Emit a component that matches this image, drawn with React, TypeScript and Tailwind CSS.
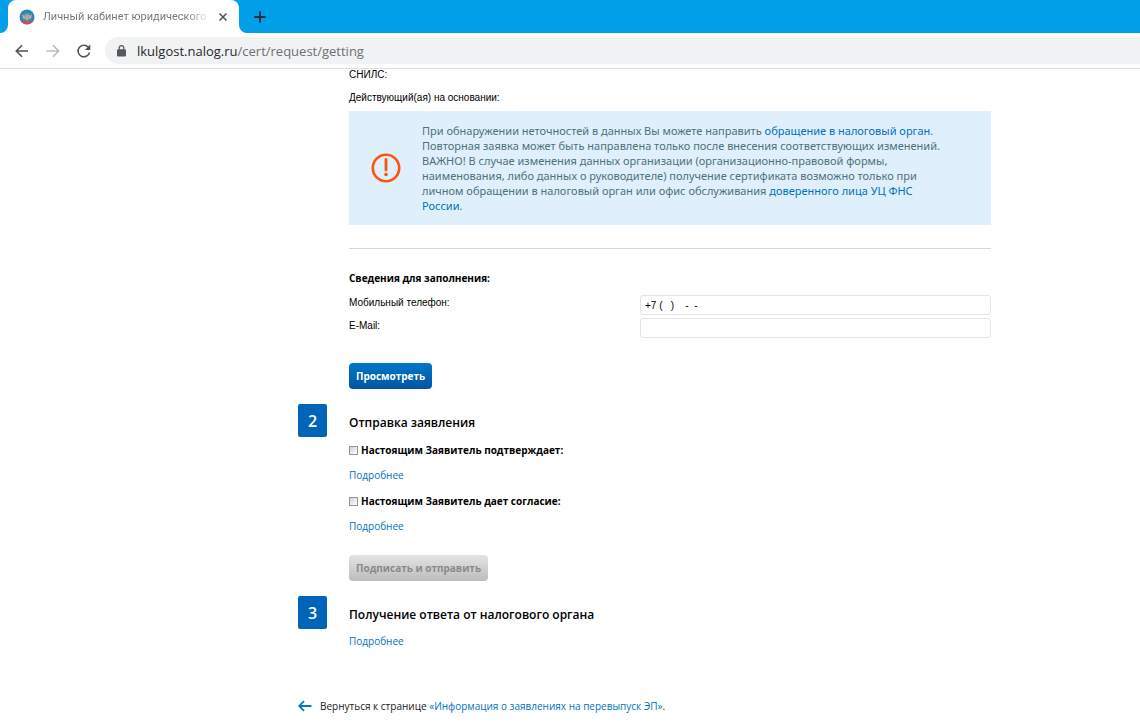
import { useState } from "react";
import type { ReactNode } from "react";

const link = "text-[#0072bc] hover:underline";

function TabStrip() {
  return (
    <div className="flex h-[33px]">
      <div className="w-2 shrink-0 rounded-br-lg bg-[#009fe8]" />
      <div className="shrink-0 bg-[#009fe8]">
        <div className="flex h-full w-[231px] items-center rounded-t-lg bg-white pl-[11px] pr-2">
          <svg className="size-4 shrink-0" viewBox="0 0 16 16" aria-hidden="true">
            <circle cx="8" cy="8" r="7.5" fill="#2a88b5" />
            <path d="M1 10.5A7.5 7.5 0 0 0 15 10.5Q8 15 1 10.5Z" fill="#d9485a" />
            <path
              d="M3 5l2.5 1.2L6.4 4l1.6 1 1.6-1 .9 2.2L13 5l-.7 5-2.4.4L8 12.4l-1.900-2L3.700 10z"
              fill="#8e9fa6"
            />
            <path d="M6.500 6.200h3v3L8 10.700 6.500 9.200z" fill="#b9a79b" />
            <path d="M4 6.500l1.500 2.500M12 6.500l-1.500 2.500" stroke="#c7d8de" strokeWidth=".7" />
          </svg>
          <span className="ml-2 flex-1 whitespace-nowrap bg-linear-to-r from-[#707478] from-85% to-white bg-clip-text font-[Roboto,'Open_Sans',sans-serif] text-[11px] leading-4 text-transparent">
            Личный кабинет юридического
          </span>
          <button type="button" aria-label="Закрыть вкладку" className="ml-1 flex size-4 shrink-0 items-center justify-center">
            <svg className="size-2" viewBox="0 0 8 8" aria-hidden="true">
              <path d="M.5.5l7 7M7.500.5l-7 7" stroke="#4c5054" strokeWidth="1.500" />
            </svg>
          </button>
        </div>
      </div>
      <div className="flex flex-1 items-center rounded-bl-lg bg-[#009fe8] pl-[13px]">
        <button type="button" aria-label="Новая вкладка" className="flex size-4 items-center justify-center">
          <svg className="size-3" viewBox="0 0 12 12" aria-hidden="true">
            <path d="M6 .3v11.400M.3 6h11.400" stroke="#25303a" strokeWidth="2" />
          </svg>
        </button>
      </div>
    </div>
  );
}

function AddressBar() {
  return (
    <div className="flex h-9 items-center border-b border-[#dcdee0] pl-3">
      <button type="button" aria-label="Назад" className="flex size-5 items-center justify-center">
        <svg className="size-4" viewBox="0 0 16 16" fill="none" stroke="#505458" strokeWidth="1.600" aria-hidden="true">
          <path d="M14 8H2.500M8 2.300L2.300 8 8 13.700" />
        </svg>
      </button>
      <button type="button" aria-label="Вперёд" className="ml-[11px] flex size-5 items-center justify-center">
        <svg className="size-4" viewBox="0 0 16 16" fill="none" stroke="#b9bcbf" strokeWidth="1.600" aria-hidden="true">
          <path d="M1.500 8H13M8 2.300L13.700 8 8 13.700" />
        </svg>
      </button>
      <button type="button" aria-label="Обновить" className="ml-[11px] flex size-5 items-center justify-center">
        <svg className="size-4" viewBox="0 0 16 16" aria-hidden="true">
          <path d="M13.500 9.500A5.800 5.800 0 1 1 12.200 4.100L13.300 5.300" fill="none" stroke="#505458" strokeWidth="1.500" />
          <path d="M14.300 1.500v5.500H8.800z" fill="#505458" />
        </svg>
      </button>
      <div className="ml-[11px] flex h-[27px] flex-1 items-center rounded-l-full bg-[#f0f2f3] pl-3">
        <svg className="h-3 w-[9px] shrink-0" viewBox="0 0 9 12" aria-hidden="true">
          <path d="M2.200 5V3a2.300 2.300 0 0 1 4.600 0v2" fill="none" stroke="#55595d" strokeWidth="1.200" />
          <rect x="0" y="4.300" width="9" height="7.200" rx="1" fill="#55595d" />
        </svg>
        <p className="ml-[11px] text-[13px] leading-5 text-[#6c7074]">
          <span className="text-[#25282b]">lkulgost.nalog.ru</span>/cert/request/getting
        </p>
      </div>
    </div>
  );
}

function Step({ number, title, children }: { number: number; title: string; children: ReactNode }) {
  return (
    <section className="flex items-start">
      <span className="flex h-[33px] w-[29px] shrink-0 items-center justify-center rounded-xs bg-[#0065b8] text-base font-semibold text-white">
        {number}
      </span>
      <div className="ml-[22px] flex-1 pt-[10px]">
        <h2 className="text-xs leading-[18px] font-semibold">{title}</h2>
        {children}
      </div>
    </section>
  );
}

function Consent({ label }: { label: string }) {
  const [checked, setChecked] = useState(false);
  return (
    <>
      <label className="mt-[10px] flex items-center gap-[3px] text-[10px] leading-4 font-bold">
        <input
          type="checkbox"
          checked={checked}
          onChange={(e) => setChecked(e.target.checked)}
          className="size-[9px] appearance-none border border-[#92969b] bg-linear-to-br from-[#cfd2d6] to-white checked:bg-[#0065b8]"
        />
        {label}
      </label>
      <Details />
    </>
  );
}

function Details() {
  return (
    <p className="mt-[9px] text-[10px] leading-4">
      <a href="#details" className={link}>
        Подробнее
      </a>
    </p>
  );
}

export default function App() {
  const [phone, setPhone] = useState("+7 (   )    -  -");
  const [email, setEmail] = useState("");
  const field =
    "h-5 w-full rounded-[3px] border border-[#dfe7e9] bg-white px-1 font-['Liberation_Sans',Arial,sans-serif] text-[10px] text-black outline-none";

  return (
    <div className="bg-white font-['Open_Sans','Noto_Sans',sans-serif] text-black">
      <header>
        <TabStrip />
        <AddressBar />
      </header>
      <main className="mr-[149px] ml-[298px] pb-3">
        <div className="ml-[51px]">
          <div className="font-['Liberation_Sans',Arial,sans-serif] text-[10px] leading-3">
            <p>СНИЛС:</p>
            <p className="mt-[11px]">Действующий(ая) на основании:</p>
          </div>
          <div className="mt-[7px] flex items-center bg-[#e0effc] py-[12px] pr-4 pl-[22px]">
            <svg className="size-[30px] shrink-0" viewBox="0 0 30 30" aria-hidden="true">
              <circle cx="15" cy="15" r="13.200" fill="none" stroke="#fa5412" strokeWidth="2.600" />
              <path d="M15 6.500v10.500" stroke="#fa5412" strokeWidth="2.800" strokeLinecap="round" />
              <circle cx="15" cy="21.500" r="1.800" fill="#fa5412" />
            </svg>
            <p className="ml-[21px] font-['Noto_Sans','Open_Sans',sans-serif] text-[11px] leading-[15px] text-[#4d7277]">
              При обнаружении неточностей в данных Вы можете направить{" "}
              <a href="#appeal" className={link}>обращение в налоговый орган</a>.
              <br />
              Повторная заявка может быть направлена только после внесения соответствующих изменений.
              <br />
              ВАЖНО! В случае изменения данных организации (организационно-правовой формы,
              <br />
              наименования, либо данных о руководителе) получение сертификата возможно только при
              <br />
              личном обращении в налоговый орган или офис обслуживания{" "}
              <a href="#trusted" className={link}>
                доверенного лица УЦ ФНС
                <br />
                России
              </a>
              .
            </p>
          </div>
          <hr className="mt-[23px] border-[#d6d8da]" />
          <h3 className="mt-[21px] text-[10px] leading-4 font-bold">Сведения для заполнения:</h3>
          <div className="mt-[9px] grid grid-cols-[291px_1fr] gap-y-[3px]">
            <label htmlFor="phone" className="font-['Liberation_Sans',Arial,sans-serif] text-[10px] leading-4">
              Мобильный телефон:
            </label>
            <input id="phone" type="tel" value={phone} onChange={(e) => setPhone(e.target.value)} className={field} />
            <label htmlFor="email" className="font-['Liberation_Sans',Arial,sans-serif] text-[10px] leading-4">
              E-Mail:
            </label>
            <input id="email" type="email" value={email} onChange={(e) => setEmail(e.target.value)} className={field} />
          </div>
          <button
            type="button"
            className="mt-[25px] block h-[26px] rounded bg-linear-to-b from-[#0078c8] to-[#0055a3] px-[7px] text-[10px] font-bold text-white"
          >
            Просмотреть
          </button>
        </div>
        <div className="mt-[15px]">
          <Step number={2} title="Отправка заявления">
            <Consent label="Настоящим Заявитель подтверждает:" />
            <Consent label="Настоящим Заявитель дает согласие:" />
            <button
              type="button"
              disabled
              className="mt-[21px] block h-[26px] rounded bg-linear-to-b from-[#e4e4e4] to-[#bcbcbc] px-[7px] text-[10px] font-bold text-[#8a8a8a]"
            >
              Подписать и отправить
            </button>
          </Step>
        </div>
        <div className="mt-[15px]">
          <Step number={3} title="Получение ответа от налогового органа">
            <Details />
          </Step>
        </div>
        <p className="mt-[49px] flex items-center text-[10px] leading-4 text-[#202020]">
          <svg className="mr-2 h-3 w-[14px] shrink-0" viewBox="0 0 14 12" fill="none" stroke="#0079c0" strokeWidth="1.800" aria-hidden="true">
            <path d="M13.500 6H1.500M6 1.200L1.200 6 6 10.800" />
          </svg>
          <span>
            Вернуться к странице{" "}
            <a href="#renewal" className={link}>«Информация о заявлениях на перевыпуск ЭП»</a>.
          </span>
        </p>
      </main>
    </div>
  );
}
